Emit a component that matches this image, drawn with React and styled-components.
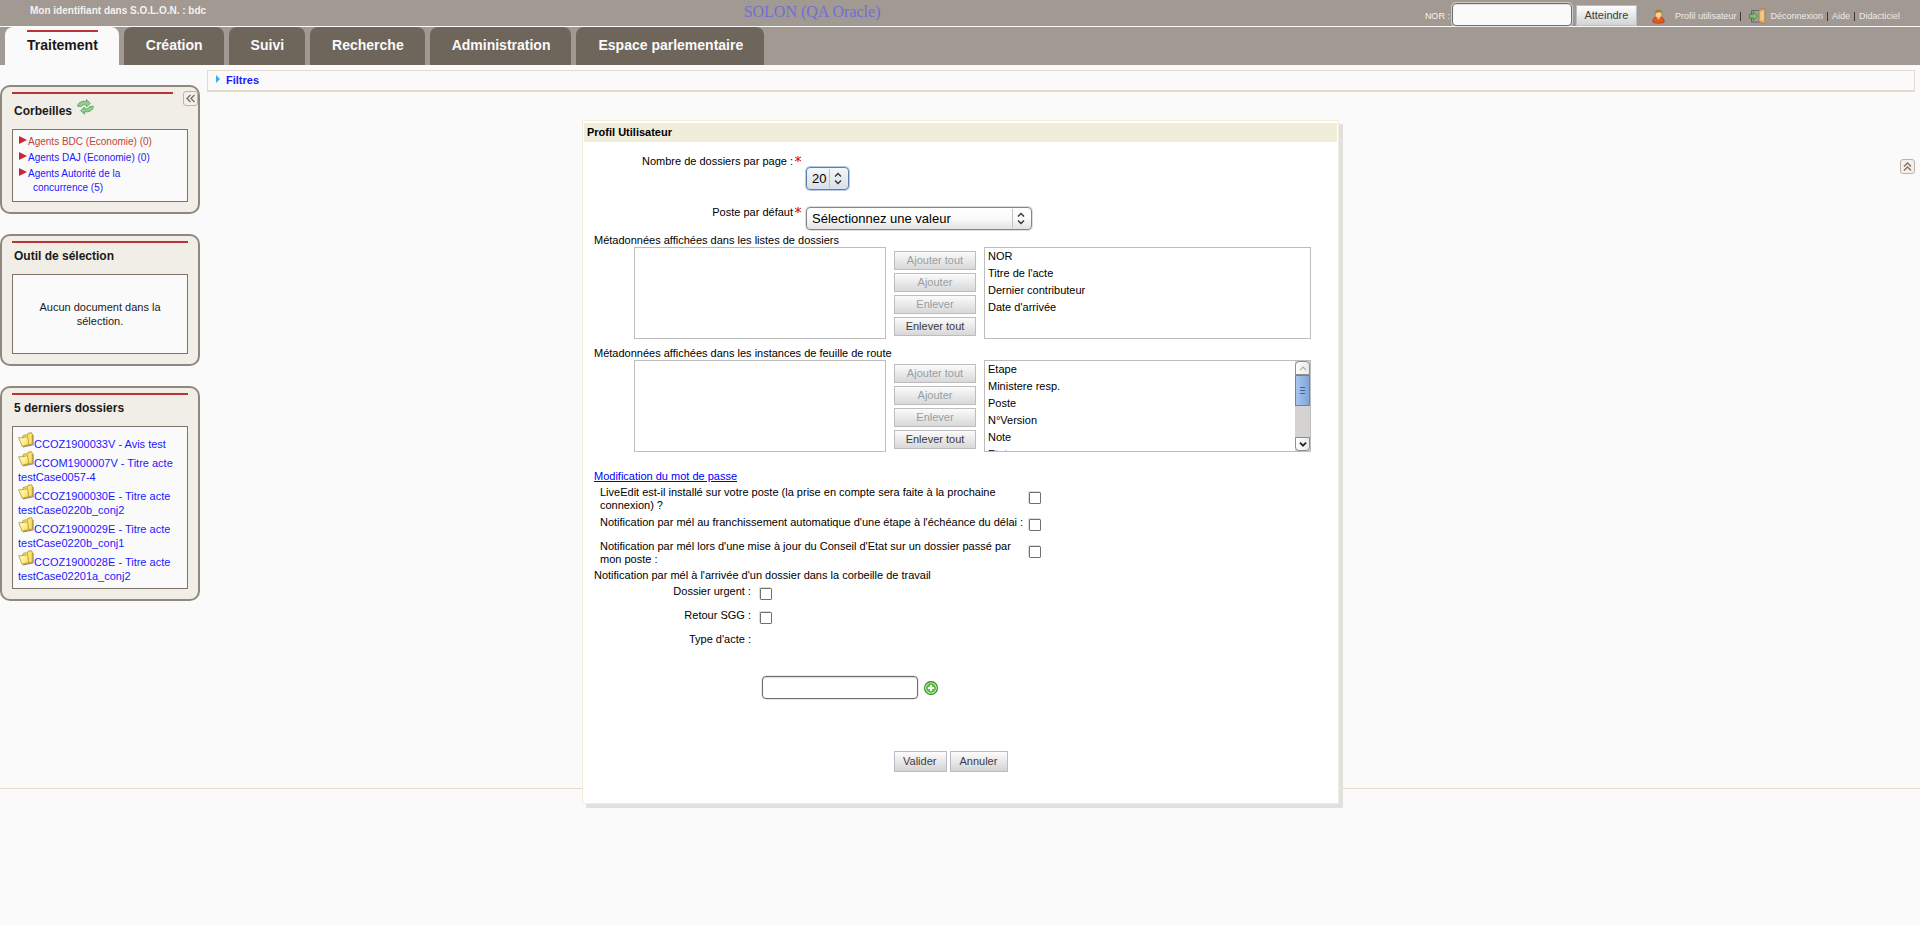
import React from 'react';
import styled, { createGlobalStyle, css } from 'styled-components';

const GlobalStyle = createGlobalStyle`
  *, *::before, *::after { box-sizing: border-box; }
  body {
    margin: 0;
    background: #fafafa;
    color: #1a1a1a;
    font: 11px/14px "Liberation Sans", Arial, sans-serif;
  }
  button, input, select { font-family: inherit; margin: 0; }
  a { color: #1a1aff; text-decoration: none; }
`;

const Page = styled.div`
  position: relative;
  display: flex;
  flex-direction: column;
  min-height: 100vh;
`;

/* ---------- Top bar ---------- */
const TopBar = styled.header`
  display: grid;
  grid-template-columns: 7fr auto 10fr;
  height: 27px;
  padding: 0 20px 0 30px;
  background: #a19992;
  border-bottom: 1px solid #fafafa;
  color: #f4f2f0;
  font-size: 9px;
`;
const Identity = styled.div`
  padding-top: 4px;
  font-size: 10px;
  font-weight: bold;
`;
const AppName = styled.div`
  padding-top: 2px;
  color: #6f6fd8;
  font: 16px/20px "Liberation Serif", "Times New Roman", serif;
`;
const Tools = styled.div`
  display: flex;
  justify-content: flex-end;
  align-items: flex-start;
`;
const NorLabel = styled.label`
  padding-top: 9px;
  margin-right: 2px;
`;
const ToolLinks = styled.nav`
  display: flex;
  align-items: center;
  gap: 4px;
  height: 20px;
  margin: 6px 0 0 15px;
  line-height: 20px;
  a { color: #ececea; }
  svg:first-child { margin-right: 6px; }
`;
const Bar = styled.span`
  width: 1px;
  height: 9px;
  margin-right: ${(p) => (p.$wide ? 4 : 0)}px;
  background: #3c3833;
`;

const TextBox = styled.input`
  width: ${(p) => p.$width}px;
  height: 23px;
  padding: 0 5px;
  border: 1px solid #6e6e6e;
  border-radius: 4px;
  background: ${(p) => p.$bg || '#fff'};
  box-shadow: 0 0 0 1px rgba(225, 222, 218, 0.7), inset 0 1px 1px #ddd;
  font-size: 13px;
`;
const NorBox = styled(TextBox)`
  margin-top: 3px;
`;

const Button = styled.button`
  height: 21px;
  padding: 0 10px 0 8px;
  border: 1px solid #b9bcc7;
  background: linear-gradient(#fdfdfd, #d3d3d3);
  color: #3c3c3c;
  font-size: 11px;
  line-height: 17px;
`;
const GoButton = styled(Button)`
  width: 61px;
  margin: 5px 0 0 4px;
  padding: 0;
`;

/* ---------- Tabs ---------- */
const TabBar = styled.nav`
  display: flex;
  gap: 5px;
  height: 38px;
  padding-left: 5px;
  background: #a19992;
`;
const Tab = styled.a`
  padding: 3px 21px 0 22px;
  border-radius: 8px 8px 0 0;
  background: ${(p) => (p.$active ? '#fafafa' : '#6e665b')};
  color: ${(p) => (p.$active ? '#1a1a1a' : '#fafafa')};
  font-size: 14px;
  font-weight: bold;
  span {
    display: block;
    padding-top: 4px;
    border-top: 2px solid ${(p) => (p.$active ? '#b93434' : 'transparent')};
    line-height: 18px;
  }
`;

/* ---------- Body ---------- */
const Body = styled.div`
  flex: 1;
  display: flex;
  align-items: flex-start;
`;
const Sidebar = styled.aside`
  flex: none;
  display: flex;
  flex-direction: column;
  gap: 20px;
  width: 200px;
  padding-top: 20px;
`;
const Panel = styled.section`
  position: relative;
  padding: 5px 10px 10px;
  border: 2px solid #90887e;
  border-radius: 10px;
  background: #f1eee7;
`;
const PanelRule = styled.div`
  height: 2px;
  margin-right: ${(p) => (p.$short ? 15 : 0)}px;
  background: #b93434;
`;
const PanelTitle = styled.h2`
  display: flex;
  gap: 5px;
  height: ${(p) => (p.$tall ? 35 : 31)}px;
  margin: 0;
  padding: ${(p) => (p.$tall ? 5 : 1)}px 2px 0;
  font-size: 12px;
  line-height: 24px;
`;
const PanelBox = styled.div`
  padding: ${(p) => p.$pad || '5px'};
  border: 1px solid #7d7569;
  background: #fafafa;
`;
const Plain = styled.ul`
  margin: 0;
  padding: 0;
  list-style: none;
`;
const Basket = styled.li`
  padding-left: 14px;
  font-size: 10px;
  text-indent: -14px;
  & + & { margin-top: 2px; }
  a { color: ${(p) => (p.$current ? '#c24141' : '#1a1aff')}; }
  svg { margin-right: 1px; vertical-align: 1px; }
`;
const EmptyNote = styled.p`
  margin: 0;
  text-align: center;
`;
const Recent = styled.li`
  svg { vertical-align: baseline; }
`;
const SquareButton = styled.button`
  display: flex;
  align-items: center;
  justify-content: center;
  width: 15px;
  height: 15px;
  padding: 0;
  border: 1px solid #bdb3a6;
  border-radius: 3px;
  background: #f3f0eb;
`;
const CollapseButton = styled(SquareButton)`
  position: absolute;
  top: 4px;
  right: 0;
`;
const Main = styled.main`
  flex: 1;
  display: flex;
  flex-direction: column;
  align-items: flex-end;
  gap: 67px;
  padding: 5px 5px 0 7px;
`;
const FilterBar = styled.div`
  display: flex;
  gap: 6px;
  align-self: stretch;
  height: 22px;
  padding: 2px 8px;
  border: 1px solid #e4dbcb;
  border-bottom-width: 2px;
  font-weight: bold;
  svg { margin-top: 2px; }
`;
const Footer = styled.footer`
  height: 137px;
  border-top: 1px solid #e4dbcb;
`;

/* ---------- Dialog ---------- */
const Layer = styled.div`
  position: absolute;
  top: 120px;
  left: 0;
  right: 0;
  display: flex;
  justify-content: center;
  padding-left: 1px;
`;
const Dialog = styled.form`
  width: 757px;
  padding: 2px 1px 31px;
  border: 1px solid #f1edd8;
  background: #fff;
  box-shadow: 4px 4px 0 #e0e0e0;
  color: #000;
`;
const DialogTitle = styled.h1`
  margin: 0 0 12px;
  padding: 0 3px;
  background: #f1eddb;
  font-size: 11px;
  line-height: 19px;
`;
const Field = styled.div`
  display: grid;
  grid-template-columns: 217px auto;
  justify-content: start;
  align-items: start;
  column-gap: 5px;
  margin-bottom: ${(p) => p.$after}px;
`;
const FieldLabel = styled.label`
  display: flex;
  justify-content: flex-end;
  gap: 2px;
  svg { margin-top: 2px; }
`;
const SelectWrap = styled.div`
  display: grid;
  grid-template-columns: ${(p) => p.$width}px;
  margin-top: ${(p) => p.$top}px;
  > * { grid-area: 1 / 1; }
  svg { justify-self: end; align-self: center; margin-right: 6px; pointer-events: none; }
`;
const Select = styled.select`
  appearance: none;
  height: 23px;
  padding: 0 20px 0 5px;
  border: 1px solid ${(p) => (p.$focused ? '#5a7fb0' : '#868686')};
  border-radius: 4px;
  background: ${(p) => (p.$focused ? 'linear-gradient(#f4f7fa, #d9dfe6)' : 'linear-gradient(#fff, #fafafa 50%, #e4e2e1)')};
  box-shadow: 0 0 0 1px ${(p) => (p.$focused ? '#b5cbe6' : '#dedede')};
  color: #000;
  font-size: 13px;
  outline: none;
`;
const GroupTitle = styled.div`
  padding-left: 10px;
`;
const PickList = styled.div`
  display: flex;
  align-items: flex-start;
  gap: 8px;
  padding: 0 26px 0 50px;
  margin-bottom: ${(p) => p.$after}px;
`;
const Frame = styled.div`
  display: flex;
  height: 92px;
  border: 1px solid #bdbdbd;
  background: #fff;
  ${(p) => (p.$grow ? css`flex: 1;` : css`width: 252px;`)}
`;
const ListBox = styled.select`
  flex: 1;
  min-width: 0;
  height: 90px;
  padding: 0;
  border: 0;
  background: transparent;
  color: #000;
  font-size: 11px;
  outline: none;
  scrollbar-width: none;
  option { min-height: 17px; height: 17px; padding: 2px 3px; line-height: 13px; }
`;
const PickButtons = styled.div`
  display: flex;
  flex-direction: column;
  gap: 3px;
  width: 82px;
  padding-top: 4px;
`;
const PickButton = styled.button`
  height: 19px;
  padding: 0;
  border: 1px solid #bdbdbd;
  background: linear-gradient(#fbfbfb, #d8d8d8);
  color: #3a3a3a;
  font-size: 11px;
  line-height: 15px;
  &:disabled { color: #9a9ea2; }
`;
const Scroll = styled.div`
  display: flex;
  flex-direction: column;
  width: 15px;
  background: #d5d3d1;
`;
const ScrollEnd = styled.div`
  display: flex;
  align-items: center;
  justify-content: center;
  height: 14px;
  border: 1px solid #8e8e8e;
  border-radius: ${(p) => (p.$bottom ? '0 0 4px 4px' : '4px 4px 0 0')};
  margin-top: ${(p) => (p.$bottom ? 'auto' : 0)};
  background: linear-gradient(90deg, #fff, #e8e8e8);
`;
const ScrollThumb = styled.div`
  display: flex;
  flex-direction: column;
  align-items: center;
  justify-content: center;
  gap: 2px;
  height: 31px;
  border: 1px solid #5f86bd;
  background: linear-gradient(90deg, #a9c6ec, #7fa5dc);
  i { width: 5px; height: 1px; background: #45618c; }
`;
const PasswordLink = styled.a`
  display: inline-block;
  margin: 0 0 3px 10px;
  color: #0000ff;
  text-decoration: underline;
`;
const Question = styled.div`
  display: grid;
  grid-template-columns: 429px auto;
  justify-content: start;
  align-items: start;
  height: 27px;
  padding-left: 16px;
  line-height: 13px;
  label { padding: ${(p) => (p.$single ? 3 : 0)}px 4px 0 0; }
  input { margin-top: 6px; }
`;
const Check = styled.input.attrs({ type: 'checkbox' })`
  appearance: none;
  width: 12px;
  height: 12px;
  border: 1px solid #74716b;
  border-radius: 1px;
  background: #fff;
  box-shadow: -1px -1px 0 #dedcd9;
`;
const NotifyTitle = styled(GroupTitle)`
  margin: 1px 0 2px;
`;
const NotifyRow = styled.div`
  display: grid;
  grid-template-columns: 167px auto;
  justify-content: start;
  align-items: start;
  column-gap: 9px;
  height: 24px;
  label { text-align: right; }
  input { margin-top: 4px; }
`;
const ActRow = styled.div`
  display: flex;
  align-items: center;
  gap: 6px;
  margin: 20px 0 52px 178px;
`;
const AddButton = styled.button`
  display: flex;
  padding: 0;
  border: 0;
  background: none;
`;
const Actions = styled.div`
  display: flex;
  gap: 3px;
  padding-left: 310px;
`;

/* ---------- Drawings ---------- */
const RefreshIcon = () => (
  <svg width="17" height="16" viewBox="0 0 17 16" fill="#93cb92" stroke="#559f58" strokeWidth="0.8" strokeLinejoin="round">
    <path d="M.6 7.300C1 3.500 4.500 1.800 9.500 2.300V.5l3.800 4-3.800 3.300V6C6.800 5.500 5 5.800 4.300 7.500z" />
    <path d="M16.400 7.200c-.3 4.200-4 6.100-9 5.700v2.300L3.600 11.600l3.800-3.500v1.700c2.600.3 4.500-.3 5.100-2.200z" />
  </svg>
);
const BasketArrow = () => (
  <svg width="8" height="8" viewBox="0 0 8 8"><path d="M0 0l8 4-8 4z" fill="#cf2435" /></svg>
);
const FolderIcon = () => (
  <svg width="16" height="16" viewBox="0 0 16 16">
    <defs>
      <linearGradient id="folder" x1="0" y1="0" x2="1" y2="1">
        <stop offset="0" stopColor="#fffde0" /><stop offset=".55" stopColor="#fdf08a" /><stop offset="1" stopColor="#f2cd3c" />
      </linearGradient>
    </defs>
    <path d="M5 15l10-2.200V3" fill="none" stroke="#8d897e" strokeWidth="1.200" />
    <path d="M4.500 5.500L5.200 3.500l3.300-.8.8.8L10 1.300l3.500-.6.8 1.500V12L5 14z" fill="#f9e36c" stroke="#b08a22" strokeWidth=".8" />
    <path d="M.7 5.800l1.300-.6.9.8L9.500 4.700l1.300 8L4.200 14.300z" fill="url(#folder)" stroke="#b8922a" strokeWidth=".8" strokeLinejoin="round" />
  </svg>
);
const UserIcon = () => (
  <svg width="13" height="15" viewBox="0 0 14 15">
    <path d="M1 13.800c-.6-3.300 1-5.400 3.700-5.700h4.600C12 8.400 13.600 10.500 13 13.800c-3.500 1.300-8.500 1.300-12 0z" fill="#e0581f" stroke="#a83a12" strokeWidth=".7" />
    <path d="M4.500 8.200L7 11l2.500-2.800z" fill="#ffb070" />
    <ellipse cx="7" cy="5" rx="3" ry="3.500" fill="#ffd38c" />
    <path d="M3.500 5C3 1.500 5 .3 7 .3S11 1.500 10.500 5C9.800 3 8 2.800 6.500 3.200 5 3.300 4.200 3.700 3.500 5z" fill="#a87d18" />
  </svg>
);
const DoorIcon = () => (
  <svg width="17" height="16" viewBox="0 0 17 16">
    <path d="M2.500 2.500h8v11.500h-8z" fill="#a3a09f" stroke="#66666c" />
    <path d="M10 2L16 .5v15L10 14z" fill="#e3b474" stroke="#a87838" strokeWidth=".8" />
    <path d="M11.500 4l3-.8v8.600l-3 .2z" fill="#efcb94" />
    <path d="M.5 6.300h3.800V3.700L8.800 8.200l-4.500 4.300V10H.5z" fill="#7cc26c" stroke="#387f38" strokeWidth=".8" />
  </svg>
);
const DoubleChevron = ({ up }) => (
  <svg width="9" height="9" viewBox="0 0 9 9" fill="none" stroke="#85705f" strokeWidth="1.400">
    <path d={up ? 'M1 4.500L4.500 1 8 4.500M1 8.500L4.500 5 8 8.500' : 'M4.500 1L1 4.500 4.500 8M8.500 1L5 4.500 8.500 8'} />
  </svg>
);
const FilterArrow = () => (
  <svg width="4" height="8" viewBox="0 0 4 8"><path d="M0 0l4 4-4 4z" fill="#35adf3" /></svg>
);
const SelectArrows = () => (
  <svg width="14" height="19" viewBox="0 0 14 19" fill="none">
    <path d="M.5 0v19" stroke="#c3c3c3" />
    <path d="M6 7.500l3-3 3 3M6 11.500l3 3 3-3" stroke="#333" strokeWidth="1.400" />
  </svg>
);
const Star = () => (
  <svg width="6" height="6" viewBox="0 0 6 6" stroke="#cf1010" aria-label="obligatoire">
    <path d="M3 0v6M0 1l6 4M6 1L0 5" />
  </svg>
);
const SmallChevron = ({ down }) => (
  <svg width="8" height="5" viewBox="0 0 8 5" fill="none" stroke={down ? '#222' : '#aaa'} strokeWidth={down ? 1.8 : 1.2}>
    <path d={down ? 'M1 .7l3 3 3-3' : 'M1 4.200l3-3 3 3'} />
  </svg>
);
const PlusIcon = () => (
  <svg width="14" height="14" viewBox="0 0 14 14">
    <circle cx="7" cy="7" r="6.400" fill="#e6f7df" stroke="#2c7a1d" strokeWidth="1.100" />
    <circle cx="7" cy="7" r="5" fill="#5cc43a" />
    <path d="M7 4v6M4 7h6" stroke="#fff" strokeWidth="2" />
  </svg>
);

/* ---------- Parts ---------- */
const tabs = ['Traitement', 'Création', 'Suivi', 'Recherche', 'Administration', 'Espace parlementaire'];
const baskets = ['Agents BDC (Economie) (0)', 'Agents DAJ (Economie) (0)'];
const recents = [
  'CCOZ1900033V - Avis test',
  'CCOM1900007V - Titre acte testCase0057-4',
  'CCOZ1900030E - Titre acte testCase0220b_conj2',
  'CCOZ1900029E - Titre acte testCase0220b_conj1',
  'CCOZ1900028E - Titre acte testCase02201a_conj2',
];
const caseColumns = ['NOR', "Titre de l'acte", 'Dernier contributeur', "Date d'arrivée"];
const routeColumns = ['Etape', 'Ministere resp.', 'Poste', 'N°Version', 'Note', 'Etat'];

function ColumnPicker({ label, items, scroll, after }) {
  return (
    <>
      <GroupTitle>{label}</GroupTitle>
      <PickList $after={after}>
        <Frame><ListBox multiple aria-label={`${label} : disponibles`} /></Frame>
        <PickButtons>
          <PickButton type="button" disabled>Ajouter tout</PickButton>
          <PickButton type="button" disabled>Ajouter</PickButton>
          <PickButton type="button" disabled>Enlever</PickButton>
          <PickButton type="button">Enlever tout</PickButton>
        </PickButtons>
        <Frame $grow>
          <ListBox multiple aria-label={label}>
            {items.map((item) => <option key={item}>{item}</option>)}
          </ListBox>
          {scroll && (
            <Scroll aria-hidden="true">
              <ScrollEnd><SmallChevron /></ScrollEnd>
              <ScrollThumb><i /><i /><i /></ScrollThumb>
              <ScrollEnd $bottom><SmallChevron down /></ScrollEnd>
            </Scroll>
          )}
        </Frame>
      </PickList>
    </>
  );
}

function ProfileDialog() {
  return (
    <Layer>
      <Dialog onSubmit={(e) => e.preventDefault()}>
        <DialogTitle>Profil Utilisateur</DialogTitle>
        <Field $after={15}>
          <FieldLabel htmlFor="perPage">Nombre de dossiers par page :<Star /></FieldLabel>
          <SelectWrap $width={43} $top={13}>
            <Select id="perPage" $focused defaultValue="20">
              <option>10</option><option>20</option><option>50</option>
            </Select>
            <SelectArrows />
          </SelectWrap>
        </Field>
        <Field $after={3}>
          <FieldLabel htmlFor="post">Poste par défaut<Star /></FieldLabel>
          <SelectWrap $width={226} $top={2}>
            <Select id="post"><option>Sélectionnez une valeur</option></Select>
            <SelectArrows />
          </SelectWrap>
        </Field>
        <ColumnPicker label="Métadonnées affichées dans les listes de dossiers" items={caseColumns} after={7} />
        <ColumnPicker label="Métadonnées affichées dans les instances de feuille de route" items={routeColumns} scroll after={17} />
        <PasswordLink href="#password">Modification du mot de passe</PasswordLink>
        <Question>
          <label htmlFor="live">LiveEdit est-il installé sur votre poste (la prise en compte sera faite à la prochaine connexion) ?</label>
          <Check id="live" />
        </Question>
        <Question $single>
          <label htmlFor="delay">Notification par mél au franchissement automatique d'une étape à l'échéance du délai :</label>
          <Check id="delay" />
        </Question>
        <Question>
          <label htmlFor="council">Notification par mél lors d'une mise à jour du Conseil d'Etat sur un dossier passé par mon poste :</label>
          <Check id="council" />
        </Question>
        <NotifyTitle>Notification par mél à l'arrivée d'un dossier dans la corbeille de travail</NotifyTitle>
        <NotifyRow><label htmlFor="urgent">Dossier urgent :</label><Check id="urgent" /></NotifyRow>
        <NotifyRow><label htmlFor="sgg">Retour SGG :</label><Check id="sgg" /></NotifyRow>
        <NotifyRow><label htmlFor="act">Type d'acte :</label></NotifyRow>
        <ActRow>
          <TextBox id="act" $width={156} />
          <AddButton type="button" aria-label="Ajouter un type d'acte"><PlusIcon /></AddButton>
        </ActRow>
        <Actions>
          <Button>Valider</Button>
          <Button type="button">Annuler</Button>
        </Actions>
      </Dialog>
    </Layer>
  );
}

export default function App() {
  return (
    <Page>
      <GlobalStyle />
      <TopBar>
        <Identity>Mon identifiant dans S.O.L.O.N. : bdc</Identity>
        <AppName>SOLON (QA Oracle)</AppName>
        <Tools>
          <NorLabel htmlFor="nor">NOR :</NorLabel>
          <NorBox id="nor" $width={120} $bg="#fafafa" />
          <GoButton type="button">Atteindre</GoButton>
          <ToolLinks>
            <UserIcon />
            <a href="#profil">Profil utilisateur</a><Bar $wide />
            <DoorIcon />
            <a href="#logout">Déconnexion</a><Bar />
            <a href="#aide">Aide</a><Bar />
            <a href="#didacticiel">Didacticiel</a>
          </ToolLinks>
        </Tools>
      </TopBar>
      <TabBar>
        {tabs.map((tab, i) => (
          <Tab key={tab} href={`#tab${i}`} $active={i === 0}><span>{tab}</span></Tab>
        ))}
      </TabBar>
      <Body>
        <Sidebar>
          <Panel>
            <PanelRule $short />
            <PanelTitle $tall>Corbeilles <RefreshIcon /></PanelTitle>
            <CollapseButton type="button" aria-label="Replier le menu"><DoubleChevron /></CollapseButton>
            <PanelBox $pad="5px 5px 6px 6px">
              <Plain>
                {baskets.map((name, i) => (
                  <Basket key={name} $current={i === 0}><BasketArrow /><a href={`#basket${i}`}>{name}</a></Basket>
                ))}
                <Basket><BasketArrow /><a href="#basket2">Agents Autorité de la<br />concurrence (5)</a></Basket>
              </Plain>
            </PanelBox>
          </Panel>
          <Panel>
            <PanelRule />
            <PanelTitle>Outil de sélection</PanelTitle>
            <PanelBox $pad="25px 20px"><EmptyNote>Aucun document dans la sélection.</EmptyNote></PanelBox>
          </Panel>
          <Panel>
            <PanelRule />
            <PanelTitle>5 derniers dossiers</PanelTitle>
            <PanelBox>
              <Plain>
                {recents.map((name, i) => (
                  <Recent key={name}><a href={`#case${i}`}><FolderIcon />{name}</a></Recent>
                ))}
              </Plain>
            </PanelBox>
          </Panel>
        </Sidebar>
        <Main>
          <FilterBar><FilterArrow /><a href="#filtres">Filtres</a></FilterBar>
          <SquareButton type="button" aria-label="Replier le bandeau"><DoubleChevron up /></SquareButton>
        </Main>
      </Body>
      <Footer />
      <ProfileDialog />
    </Page>
  );
}
